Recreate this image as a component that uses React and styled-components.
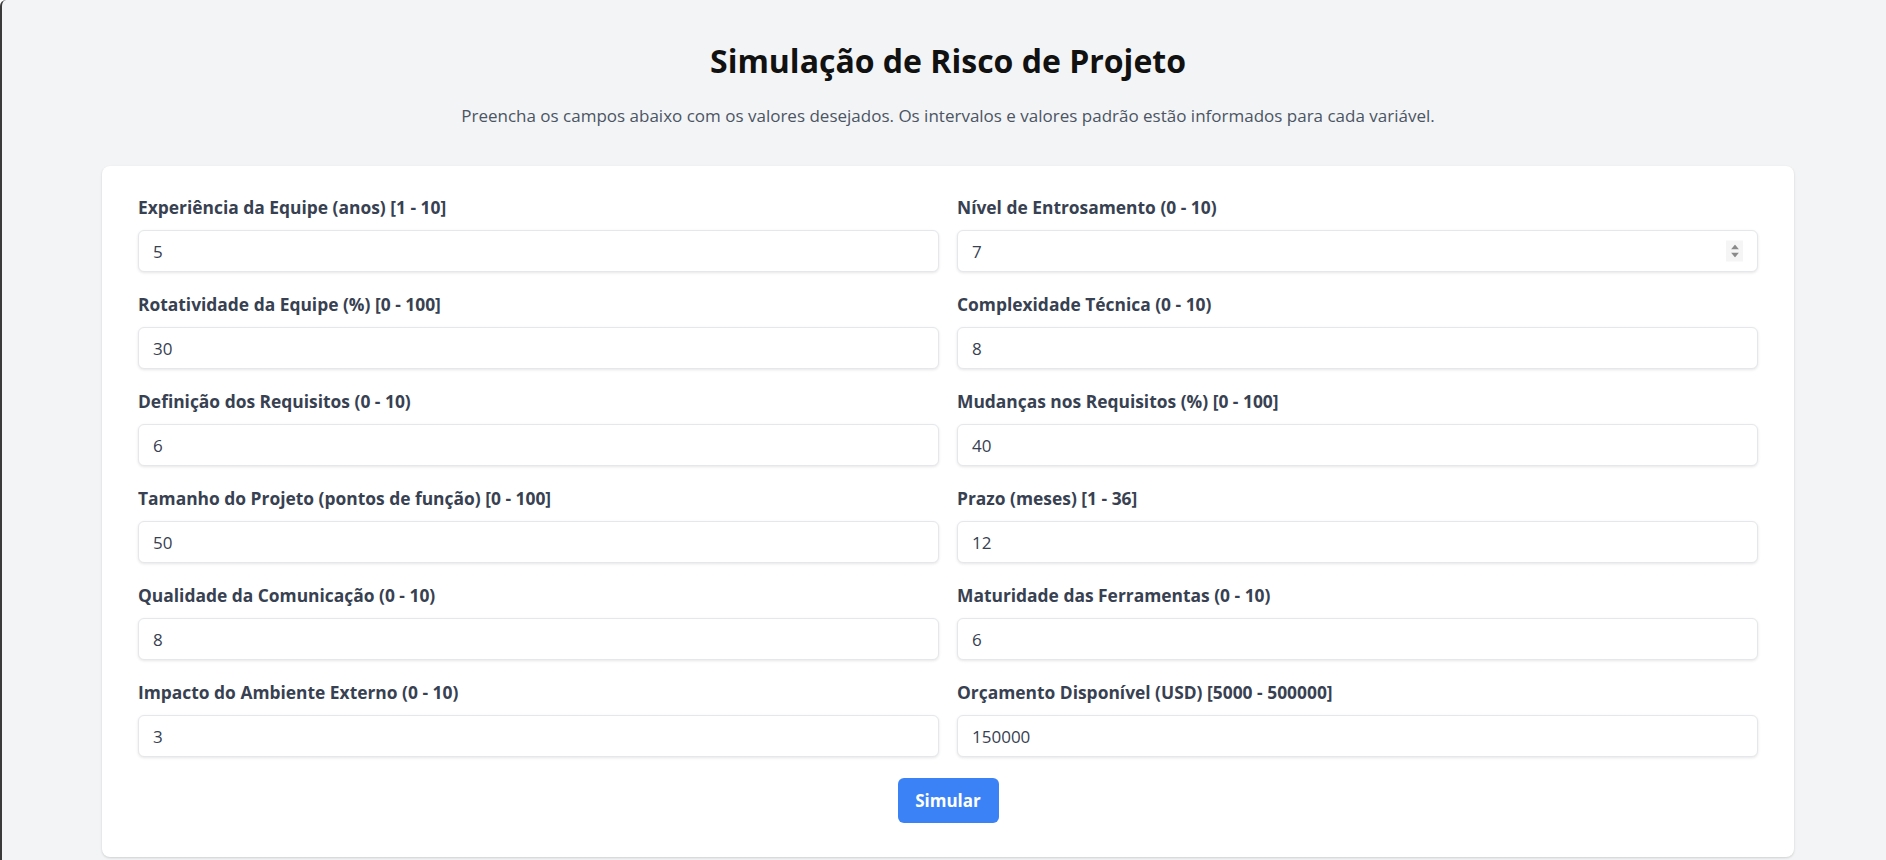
import React from 'react';
import styled, { createGlobalStyle } from 'styled-components';

const GlobalStyle = createGlobalStyle`
  * {
    box-sizing: border-box;
  }
  body {
    margin: 0;
    font-family: "Open Sans", "Noto Sans", sans-serif;
  }
`;

const Page = styled.div`
  min-height: 100vh;
  background-color: #f3f4f6;
  border-left: 2px solid #3a3a3a;
  border-top-left-radius: 6px;
  padding: 43px 0 0 8px;
`;

const Title = styled.h1`
  margin: 0;
  font-size: 32px;
  line-height: 36px;
  font-weight: 700;
  color: #111111;
  text-align: center;
`;

const Subtitle = styled.p`
  margin: 25px 0 38px;
  font-size: 17px;
  line-height: 24px;
  color: #4b5563;
  text-align: center;
`;

const Card = styled.form`
  width: 1692px;
  margin: 0 auto;
  background-color: white;
  border-radius: 8px;
  box-shadow: 0 1px 3px rgba(0, 0, 0, 0.1), 0 1px 2px rgba(0, 0, 0, 0.06);
  padding: 29px 36px 34px;
`;

const Grid = styled.div`
  display: grid;
  grid-template-columns: 1fr 1fr;
  column-gap: 18px;
  row-gap: 20px;
`;

const Field = styled.div`
  display: flex;
  flex-direction: column;
`;

const Label = styled.label`
  font-size: 17.4px;
  line-height: 24px;
  font-weight: 700;
  color: #374151;
  margin-bottom: 11px;
`;

const InputWrap = styled.div`
  position: relative;
`;

const Input = styled.input`
  width: 100%;
  height: 42px;
  padding: 0 14px;
  border: 1px solid #e5e7eb;
  border-radius: 6px;
  box-shadow: 0 1px 3px rgba(0, 0, 0, 0.1);
  font-family: "Open Sans", "Noto Sans", sans-serif;
  font-size: 17px;
  color: #374151;
  background: white;
  outline: none;
`;

const Spinner = styled.div`
  position: absolute;
  right: 15px;
  top: 50%;
  transform: translateY(-50%);
  width: 17px;
  height: 21px;
  background-color: #f5f5f5;
  display: flex;
  flex-direction: column;
  align-items: center;
  justify-content: center;
  gap: 3px;
`;

const Actions = styled.div`
  display: flex;
  justify-content: center;
  margin-top: 21px;
`;

const Button = styled.button`
  width: 101px;
  height: 45px;
  padding: 0;
  background-color: #3b82f6;
  color: white;
  border: none;
  border-radius: 6px;
  font-family: "Open Sans", "Noto Sans", sans-serif;
  font-size: 17px;
  font-weight: 700;
  cursor: pointer;
`;

const fields = [
  { label: 'Experiência da Equipe (anos) [1 - 10]', value: '5' },
  { label: 'Nível de Entrosamento (0 - 10)', value: '7', spinner: true },
  { label: 'Rotatividade da Equipe (%) [0 - 100]', value: '30' },
  { label: 'Complexidade Técnica (0 - 10)', value: '8' },
  { label: 'Definição dos Requisitos (0 - 10)', value: '6' },
  { label: 'Mudanças nos Requisitos (%) [0 - 100]', value: '40' },
  { label: 'Tamanho do Projeto (pontos de função) [0 - 100]', value: '50' },
  { label: 'Prazo (meses) [1 - 36]', value: '12' },
  { label: 'Qualidade da Comunicação (0 - 10)', value: '8' },
  { label: 'Maturidade das Ferramentas (0 - 10)', value: '6' },
  { label: 'Impacto do Ambiente Externo (0 - 10)', value: '3' },
  { label: 'Orçamento Disponível (USD) [5000 - 500000]', value: '150000' },
];

function SpinnerArrows() {
  return (
    <Spinner>
      <svg width="8" height="5" viewBox="0 0 8 5">
        <path d="M4 0 L8 5 L0 5 Z" fill="#8a8a8a" />
      </svg>
      <svg width="8" height="5" viewBox="0 0 8 5">
        <path d="M0 0 L8 0 L4 5 Z" fill="#8a8a8a" />
      </svg>
    </Spinner>
  );
}

function App() {
  return (
    <Page>
      <GlobalStyle />
      <Title>Simulação de Risco de Projeto</Title>
      <Subtitle>
        Preencha os campos abaixo com os valores desejados. Os intervalos e valores padrão estão informados para cada variável.
      </Subtitle>
      <Card onSubmit={(e) => e.preventDefault()}>
        <Grid>
          {fields.map((f) => (
            <Field key={f.label}>
              <Label>{f.label}</Label>
              <InputWrap>
                <Input type="text" defaultValue={f.value} />
                {f.spinner && <SpinnerArrows />}
              </InputWrap>
            </Field>
          ))}
        </Grid>
        <Actions>
          <Button type="submit">Simular</Button>
        </Actions>
      </Card>
    </Page>
  );
}

export default App;
